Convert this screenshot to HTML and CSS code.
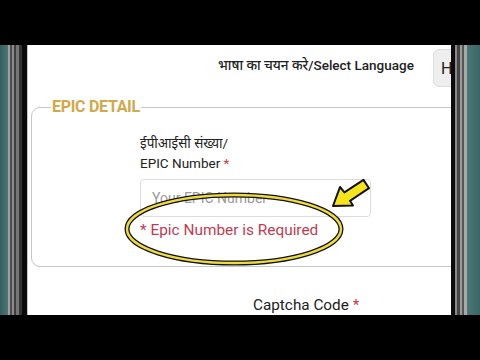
FILE: index.html
```html
<!DOCTYPE html>
<html lang="hi">
<head>
<meta charset="utf-8">
<title>EPIC Detail</title>
<link rel="stylesheet" href="styles.css">
</head>
<body>
  <div class="bar"></div>
  <div class="phone">
    <div class="bezel bezel-left"></div>
    <main class="screen">
      <div class="lang-row">
        <span class="lang-label">भाषा का चयन करे/Select Language</span>
        <button class="lang-btn">H</button>
      </div>
      <fieldset class="epic">
        <legend>EPIC DETAIL</legend>
        <div class="field">
          <label class="field-label" for="epic">ईपीआईसी संख्या/<br>EPIC Number <span class="req">*</span></label>
          <input id="epic" class="field-input" type="text" placeholder="Your EPIC Number">
          <div class="error">* Epic Number is Required</div>
        </div>
      </fieldset>
      <div class="captcha">Captcha Code <span class="req">*</span></div>
    </main>
    <div class="bezel bezel-right"></div>
  </div>
  <div class="bar"></div>

  <svg class="annot" width="480" height="360" viewBox="0 0 480 360">
    <ellipse cx="234" cy="229" rx="107" ry="34" fill="none" stroke="#111" stroke-width="5"/>
    <ellipse cx="234" cy="229" rx="107" ry="34" fill="none" stroke="#efdc3c" stroke-width="2.4"/>
    <polygon points="333,206 353,205.5 350,200.8 369,188.2 363.5,179.9 344.4,192.4 340,187" fill="#f6e41a" stroke="#111" stroke-width="2" stroke-linejoin="round"/>
  </svg>
</body>
</html>
```

FILE: styles.css
```css
html, body {
  margin: 0;
  padding: 0;
}
body {
  position: relative;
  width: 480px;
  height: 360px;
  overflow: hidden;
  background: #000;
  font-family: Roboto, "Noto Sans Devanagari", "Lohit Devanagari", "Noto Sans", sans-serif;
  color: #222;
}
.bar {
  height: 45px;
  background: #000;
}
.phone {
  display: flex;
  height: 270px;
}
.bezel {
  flex: none;
}
.bezel-left {
  width: 28px;
  background: linear-gradient(to right,
    #355f5e 0, #4a7876 8px,
    #a0a0a0 8px, #a0a0a0 10px,
    #4d4d4d 10px, #4d4d4d 12px,
    #8c8c8c 12px, #8c8c8c 14px,
    #3e3e3e 14px, #3e3e3e 16px,
    #767676 16px, #767676 19px,
    #333 19px, #333 22px,
    #0a0a0a 22px, #0a0a0a 27px,
    #c4c4c4 27px, #c4c4c4 28px);
}
.bezel-right {
  width: 29px;
  background: linear-gradient(to right,
    #0c0c0c 0, #0c0c0c 4px,
    #8a8a8a 4px, #8a8a8a 6px,
    #444 6px, #444 9px,
    #9a9a9a 9px, #9a9a9a 11px,
    #555 11px, #555 13px,
    #a8a8a8 13px, #a8a8a8 16px,
    #4a7876 16px, #3a6564 29px);
}
.screen {
  flex: 1;
  background: #fff;
  overflow: hidden;
  min-width: 0;
}
.lang-row {
  display: flex;
  align-items: center;
  gap: 19px;
  margin-top: 4px;
  padding-left: 190px;
  white-space: nowrap;
}
.lang-label {
  font-size: 13.5px;
  font-weight: 500;
  color: #222;
  margin-top: -3px;
}
.lang-btn {
  flex: none;
  width: 60px;
  height: 38px;
  padding: 0 0 0 7px;
  text-align: left;
  font-family: inherit;
  font-size: 16px;
  color: #222;
  background: #eeeeee;
  border: 1px solid #dedede;
  border-radius: 6px;
}
.epic {
  width: 440px;
  box-sizing: border-box;
  margin: 11px 0 0 3px;
  padding: 17px 0 25px 19px;
  border: 1px solid #c6c6c6;
  border-radius: 9px;
}
.epic legend {
  padding: 0 1px;
  font-size: 16px;
  line-height: 18px;
  font-weight: 700;
  letter-spacing: -0.3px;
  color: #d2a84a;
}
.field {
  padding-left: 89px;
}
.field-label {
  display: block;
  font-size: 13.5px;
  line-height: 20px;
  color: #222;
}
.req {
  color: #c93a3a;
}
.field-input {
  display: block;
  box-sizing: border-box;
  width: 231px;
  height: 38px;
  margin-top: 6px;
  padding: 0 11px;
  font-family: inherit;
  font-size: 14px;
  color: #222;
  border: 1px solid #dddddd;
  border-radius: 4px;
  outline: none;
}
.field-input::placeholder {
  color: #9a9a9a;
}
.error {
  margin-top: 2px;
  font-size: 15.4px;
  line-height: 22px;
  color: #c23b50;
}
.captcha {
  margin-top: 30px;
  padding-left: 225px;
  font-size: 15.3px;
  line-height: 16px;
  color: #222;
}
.annot {
  position: absolute;
  top: 0;
  left: 0;
  pointer-events: none;
}
```
